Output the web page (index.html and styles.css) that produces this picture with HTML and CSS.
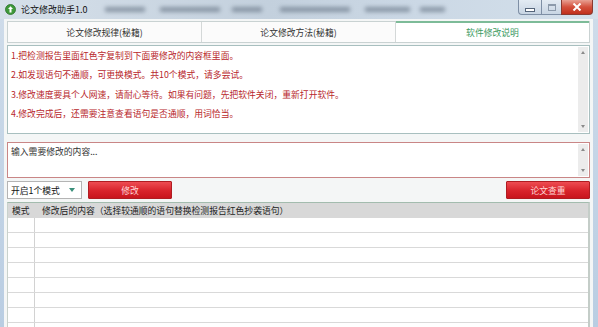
FILE: index.html
```html
<!DOCTYPE html>
<html lang="zh-CN">

<head>
    <meta charset="UTF-8">
    <title>论文修改助手1.0</title>
    <link rel="stylesheet" href="styles.css">
</head>

<body>
    <div class="window">
        <div class="titlebar">
            <!-- blurred desktop behind the aero glass -->
            <div class="glass-blur">
                <span class="blob b1"></span>
                <span class="blob b2"></span>
                <span class="blob b3"></span>
                <span class="blob b4"></span>
                <span class="blob b5"></span>
                <span class="blob b6"></span>
            </div>
            <svg class="app-icon" width="11" height="11" viewBox="0 0 11 11">
                <circle cx="5.5" cy="5.5" r="5" fill="#3f9a3a" stroke="#2b6e28" stroke-width="0.8"/>
                <path d="M5.5 2.2 L8 5 H6.5 V8.5 H4.5 V5 H3 Z" fill="#ffffff"/>
            </svg>
            <span class="title">论文修改助手1.0</span>
            <div class="caption-buttons">
                <div class="cap cap-min"><span></span></div>
                <div class="cap cap-max"><span></span></div>
                <div class="cap cap-close">
                    <svg width="10" height="8" viewBox="0 0 10 8">
                        <path d="M1.5 0.5 L8.5 7.5 M8.5 0.5 L1.5 7.5" stroke="#ffffff" stroke-width="2"/>
                    </svg>
                </div>
            </div>
        </div>

        <div class="frame">
            <div class="client">
                <div class="tabs">
                    <div class="tab">论文修改规律(秘籍)</div>
                    <div class="tab">论文修改方法(秘籍)</div>
                    <div class="tab active">软件修改说明</div>
                </div>

                <div class="info-box">
                    <div class="info-text">
                        <p>1.把检测报告里面红色字复制到下面要修改的内容框里面。</p>
                        <p>2.如发现语句不通顺，可更换模式。共10个模式，请多尝试。</p>
                        <p>3.修改速度要具个人网速，请耐心等待。如果有问题，先把软件关闭，重新打开软件。</p>
                        <p>4.修改完成后，还需要注意查看语句是否通顺，用词恰当。</p>
                    </div>
                    <div class="scrollbar">
                        <span class="arrow-up"></span>
                        <span class="arrow-down"></span>
                    </div>
                </div>

                <div class="input-box">
                    <div class="input-text">输入需要修改的内容...</div>
                    <div class="scrollbar">
                        <span class="arrow-up"></span>
                        <span class="arrow-down"></span>
                    </div>
                </div>

                <div class="controls">
                    <div class="select">
                        <span>开启1个模式</span>
                        <span class="select-arrow"></span>
                    </div>
                    <button class="btn">修改</button>
                    <button class="btn btn-check">论文查重</button>
                </div>

                <div class="table">
                    <div class="row head">
                        <div class="c1">模式</div>
                        <div class="c2">修改后的内容（选择较通顺的语句替换检测报告红色抄袭语句）</div>
                    </div>
                    <div class="row"><div class="c1"></div><div class="c2"></div></div>
                    <div class="row"><div class="c1"></div><div class="c2"></div></div>
                    <div class="row"><div class="c1"></div><div class="c2"></div></div>
                    <div class="row"><div class="c1"></div><div class="c2"></div></div>
                    <div class="row"><div class="c1"></div><div class="c2"></div></div>
                    <div class="row"><div class="c1"></div><div class="c2"></div></div>
                    <div class="row"><div class="c1"></div><div class="c2"></div></div>
                    <div class="row"><div class="c1"></div><div class="c2"></div></div>
                </div>
            </div>
        </div>
    </div>
</body>

</html>
```

FILE: styles.css
```css
body {
    margin: 0;
    width: 598px;
    height: 327px;
    overflow: hidden;
    font-family: "Noto Sans CJK SC", "Liberation Sans", sans-serif;
    font-size: 8.8px;
    color: #222;
}

.window {
    display: flex;
    flex-direction: column;
    height: 327px;
    background: linear-gradient(180deg, #cfdcea 0%, #b9cde2 100%);
}

/* title bar */

.titlebar {
    height: 19px;
    display: flex;
    align-items: center;
    position: relative;
    overflow: hidden;
    background: linear-gradient(90deg, #d6e0ea 0%, #c3d0dd 45%, #cbd8e5 70%, #d4e0eb 100%);
}

.blob {
    position: absolute;
    top: 7px;
    height: 5px;
    background: #5d6b7c;
    opacity: 0.6;
    filter: blur(2px);
}

.b1 { left: 105px; width: 40px; }
.b2 { left: 160px; width: 60px; }
.b3 { left: 232px; width: 30px; }
.b4 { left: 280px; width: 70px; }
.b5 { left: 365px; width: 45px; }
.b6 { left: 420px; width: 25px; }

.app-icon {
    position: relative;
    margin-left: 5px;
    margin-right: 5px;
}

.title {
    position: relative;
    font-size: 9px;
    color: #111;
}

.caption-buttons {
    position: absolute;
    right: 5px;
    top: 0;
    display: flex;
    height: 15px;
}

.cap {
    display: flex;
    justify-content: center;
    align-items: center;
    border: 1px solid #7e8fa5;
    border-top: none;
}

.cap-min {
    width: 22px;
    border-right: none;
    border-bottom-left-radius: 4px;
    background: linear-gradient(180deg, #e3ebf3, #c8d5e3);
}

.cap-min span {
    width: 8px;
    height: 2px;
    margin-top: 5px;
    background: #ffffff;
    border: 1px solid #55657a;
}

.cap-max {
    width: 19px;
    border-right: none;
    background: linear-gradient(180deg, #e3ebf3, #c8d5e3);
}

.cap-max span {
    width: 6px;
    height: 4px;
    border: 1px solid #8c9aab;
    border-top-width: 2px;
}

.cap-close {
    width: 30px;
    border-bottom-right-radius: 4px;
    border-color: #8a3a30;
    background: linear-gradient(180deg, #e8a093 0%, #d4503c 50%, #c0301c 100%);
}

/* frame + client area */

.frame {
    flex: 1;
    display: flex;
    padding: 0 5px 0 4px;
    min-height: 0;
}

.client {
    flex: 1;
    display: flex;
    flex-direction: column;
    padding: 2px 3px 0 3px;
    background-color: #f4f6f6;
    min-height: 0;
}

/* tabs */

.tabs {
    display: flex;
    height: 22px;
    border: 1px solid #c9d2d2;
    box-sizing: border-box;
    background: #fbfbfb;
}

.tab {
    flex: 1;
    display: flex;
    justify-content: center;
    align-items: center;
    color: #333;
    border-right: 1px solid #d4d8d8;
}

.tab:last-child {
    border-right: none;
}

.tab.active {
    background: #ffffff;
    color: #3b9a62;
    border-top: 2px solid #7dbb98;
    margin-top: -1px;
}

/* info text area */

.info-box {
    display: flex;
    height: 89px;
    margin-top: 2px;
    border: 1px solid #a8bfbf;
    box-sizing: border-box;
    background: #ffffff;
}

.info-text {
    flex: 1;
    padding: 0 3px;
    color: #b8272c;
}

.info-text p {
    margin: 0;
    line-height: 19.3px;
}

.scrollbar {
    width: 10px;
    margin: 1px 1px 1px 0;
    background: #ececec;
    display: flex;
    flex-direction: column;
    justify-content: space-between;
    align-items: center;
    padding: 4px 0;
}

.arrow-up,
.arrow-down {
    width: 0;
    height: 0;
    border-left: 2.5px solid transparent;
    border-right: 2.5px solid transparent;
}

.arrow-up {
    border-bottom: 3px solid #8a8a8a;
}

.arrow-down {
    border-top: 3px solid #8a8a8a;
}

/* input area */

.input-box {
    display: flex;
    height: 36px;
    margin-top: 8px;
    border: 1px solid #c98686;
    box-sizing: border-box;
    background: #ffffff;
}

.input-text {
    flex: 1;
    padding: 2px 3px;
    color: #333;
}

/* controls row */

.controls {
    display: flex;
    height: 18px;
    margin-top: 3px;
}

.select {
    width: 75px;
    display: flex;
    align-items: center;
    justify-content: space-between;
    padding: 0 6px 0 3px;
    box-sizing: border-box;
    border: 1px solid #b4b4b4;
    background: #ffffff;
    color: #111;
}

.select-arrow {
    width: 0;
    height: 0;
    border-left: 3px solid transparent;
    border-right: 3px solid transparent;
    border-top: 4px solid #3a8f7a;
}

.btn {
    width: 84px;
    margin-left: 6px;
    padding: 0;
    border: 1px solid #b01c22;
    border-radius: 1px;
    background: linear-gradient(180deg, #ee4c52 0%, #d8232b 55%, #c8151d 100%);
    color: #ffd8d8;
    font-family: inherit;
    font-size: 8.8px;
}

.btn-check {
    margin-left: auto;
}

/* result table */

.table {
    flex: 1;
    margin-top: 3px;
    border-top: 1px solid #a3bcae;
    border-left: 1px solid #c9d2cc;
    border-right: 2px solid #c4cdc8;
    background: #ffffff;
    overflow: hidden;
}

.row {
    display: flex;
    height: 14px;
    border-bottom: 1px solid #d9d9d9;
}

.row .c1 {
    width: 26px;
    border-right: 1px solid #d2d2d2;
}

.row .c2 {
    flex: 1;
}

.row.head {
    height: 15px;
    border-bottom: none;
    background: #d8d8d8;
    align-items: center;
    color: #222;
}

.row.head .c1 {
    border-right: none;
    padding-left: 4px;
    width: 23px;
}

.row.head .c2 {
    padding-left: 7px;
}
```
